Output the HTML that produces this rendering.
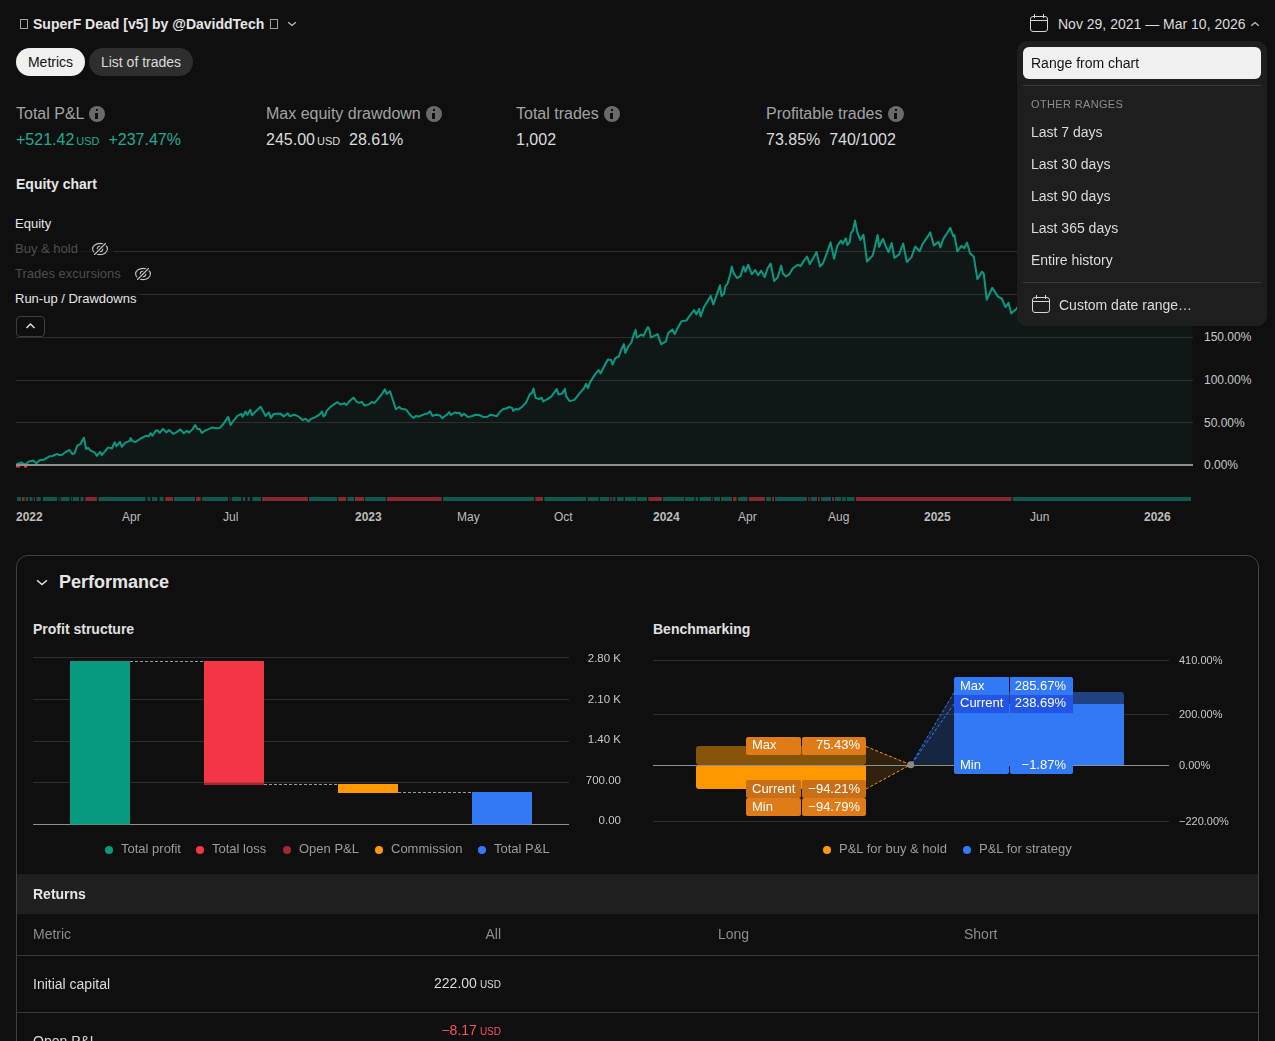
<!DOCTYPE html>
<html><head><meta charset="utf-8"><style>
*{box-sizing:border-box;margin:0;padding:0}
html,body{width:1275px;height:1041px;overflow:hidden;background:#0f0f0f}
body{position:relative;font-family:"Liberation Sans",sans-serif;color:#dbdbdb}
.a{position:absolute;white-space:nowrap}
.tofu{position:absolute;border:1px solid #a0a0a0;}
.pill{position:absolute;height:28px;border-radius:14px;font-size:14px;line-height:28px;text-align:center}
.lbl{font-size:16px;color:#a3a3a3;line-height:20px}
.val{font-size:16px;color:#dbdbdb;line-height:20px}
.usd{font-size:11px;margin-left:2px}
.info{display:inline-block;width:16px;height:16px;border-radius:50%;background:#6a6a6a;position:absolute}.info:before{content:"";position:absolute;left:7px;top:3px;width:2px;height:2px;background:#0f0f0f}.info:after{content:"";position:absolute;left:7px;top:7px;width:2px;height:6px;background:#0f0f0f;box-shadow:-1px 0 0 0 #0f0f0f}
.lg{font-size:13px;line-height:25px;background:rgba(15,15,15,0.6);padding:0 0 0 0}
.ax{font-size:12px;color:#c8c8c8;line-height:14px}
.mo{font-size:12px;color:#bdbdbd;line-height:14px}
.yr{font-weight:700}
.dd{will-change:transform;position:absolute;left:1017px;top:41px;width:250px;height:285px;background:#1e1e1e;border-radius:10px}
.ddi{position:absolute;left:14px;font-size:14px;line-height:32px;color:#dbdbdb}
.sep{position:absolute;left:6px;width:238px;height:1px;background:#3a3a3a}
.pax{font-size:11.5px;color:#c8c8c8;line-height:12px;text-align:right}.bax{font-size:11px}
.leg{font-size:13px;color:#9c9c9c;line-height:16px}
.dot{position:absolute;width:8px;height:8px;border-radius:50%}
.bl{position:absolute;font-size:13px;color:#fff;line-height:18px}
</style></head><body>
<!-- header -->
<div class="tofu" style="left:20px;top:19px;width:8px;height:10px"></div>
<div class="a" style="left:33px;top:16px;font-size:14px;font-weight:700;line-height:17px;color:#e6e6e6">SuperF Dead [v5] by @DaviddTech</div>
<div class="tofu" style="left:270px;top:19px;width:8px;height:10px"></div>
<svg class="a" style="left:286px;top:20px" width="12" height="8" viewBox="0 0 12 8"><path d="M2.2 2.3 L6 5.5 L9.8 2.3" fill="none" stroke="#c4c4c4" stroke-width="1.2"/></svg>

<div class="pill" style="left:16px;top:48px;width:69px;background:#f0f0f0;color:#131313">Metrics</div>
<div class="pill" style="left:89px;top:48px;width:104px;background:#2e2e2e;color:#dbdbdb">List of trades</div>

<!-- date range -->
<svg class="a" style="left:1029px;top:13px" width="20" height="20" viewBox="0 0 20 20"><rect x="1.5" y="3.5" width="17" height="15" rx="2.5" fill="none" stroke="#d6d6d6" stroke-width="1"/><path d="M1.5 7.5 H18.5 M5.5 1 V5 M14.5 1 V5" stroke="#d6d6d6" stroke-width="1"/></svg>
<div class="a" style="left:1058px;top:16px;font-size:14px;line-height:17px;color:#dbdbdb">Nov 29, 2021 — Mar 10, 2026</div>
<svg class="a" style="left:1249px;top:19px" width="12" height="8" viewBox="0 0 12 8"><path d="M2.2 6.7 L6 3.5 L9.8 6.7" fill="none" stroke="#c4c4c4" stroke-width="1.2"/></svg>

<!-- metrics -->
<div class="a lbl" style="left:16px;top:104px">Total P&amp;L</div><div class="info" style="left:89px;top:106px"></div>
<div class="a val" style="left:16px;top:130px;color:#22ab94">+521.42<span class="usd">USD</span>&nbsp;&nbsp;+237.47%</div>
<div class="a lbl" style="left:266px;top:104px">Max equity drawdown</div><div class="info" style="left:426px;top:106px"></div>
<div class="a val" style="left:266px;top:130px">245.00<span class="usd">USD</span>&nbsp;&nbsp;28.61%</div>
<div class="a lbl" style="left:516px;top:104px">Total trades</div><div class="info" style="left:604px;top:106px"></div>
<div class="a val" style="left:516px;top:130px">1,002</div>
<div class="a lbl" style="left:766px;top:104px">Profitable trades</div><div class="info" style="left:888px;top:106px"></div>
<div class="a val" style="left:766px;top:130px">73.85%&nbsp;&nbsp;740/1002</div>

<div class="a" style="left:16px;top:176px;font-size:14px;font-weight:700;line-height:17px;color:#e6e6e6">Equity chart</div>

<!-- chart -->
<svg class="a" style="left:0;top:0" width="1275" height="560" viewBox="0 0 1275 560">
<path d="M16.3,464.4 L21.1,462.5 L25.4,464.6 L28.5,461.6 L33.2,460.5 L36.3,463.2 L39.5,460.3 L43.9,459.7 L49.5,456.3 L52.4,456.0 L57.1,453.8 L58.8,455.0 L61.8,455.0 L65.9,451.8 L69.4,449.9 L72.4,454.2 L74.7,453.0 L77.1,445.9 L80.6,443.8 L83.9,437.7 L86.2,449.1 L88.2,447.9 L90.6,450.6 L94.7,452.3 L96.8,455.8 L100.0,451.8 L101.8,455.0 L104.1,452.3 L108.2,447.4 L111.8,448.5 L114.7,442.4 L116.5,446.2 L120.0,441.8 L121.8,446.8 L125.3,442.6 L130.0,440.9 L130.6,437.9 L132.4,440.9 L135.3,442.1 L140.6,438.5 L145.9,435.8 L148.8,436.2 L150.6,433.0 L152.4,435.8 L155.9,430.6 L157.4,430.3 L159.7,432.9 L163.0,428.9 L166.2,432.4 L169.1,430.1 L173.2,433.8 L176.8,432.1 L180.3,429.4 L183.8,433.2 L187.0,430.9 L189.1,432.6 L192.6,429.1 L195.2,425.0 L197.4,429.1 L199.7,429.1 L201.8,432.9 L205.6,430.3 L208.5,429.1 L212.6,427.4 L216.2,428.2 L219.7,427.9 L223.2,424.2 L225.6,420.6 L228.2,416.8 L230.5,425.0 L233.8,420.3 L237.4,415.9 L241.5,413.8 L242.6,416.8 L245.6,411.5 L247.4,414.8 L250.3,409.7 L252.1,415.2 L255.6,411.5 L260.6,406.8 L263.2,411.5 L265.6,415.9 L268.9,412.4 L270.9,417.9 L273.6,414.1 L280.3,413.6 L283.8,416.4 L287.7,413.2 L289.7,416.2 L294.4,414.8 L298.5,416.4 L302.9,420.2 L305.6,418.6 L308.2,421.4 L311.2,418.8 L315.3,417.1 L319.4,414.7 L322.1,411.5 L323.5,416.5 L325.3,414.7 L326.5,411.2 L330.0,407.3 L333.5,404.7 L337.4,402.1 L340.6,404.5 L344.5,403.3 L346.5,405.0 L349.4,401.2 L353.5,397.6 L357.1,402.1 L359.4,402.9 L361.8,401.8 L364.7,405.6 L369.4,404.1 L372.0,401.8 L374.1,403.3 L377.6,399.4 L381.8,394.1 L384.9,389.4 L386.8,393.9 L390.0,391.2 L395.9,409.2 L399.4,406.8 L401.2,408.8 L405.9,409.4 L410.0,414.7 L413.2,417.9 L416.2,415.9 L418.6,416.7 L424.7,414.1 L427.6,413.5 L430.0,411.2 L432.4,415.9 L436.5,414.7 L440.0,415.5 L442.4,418.2 L445.9,415.3 L447.4,414.4 L449.1,412.1 L450.9,415.0 L455.0,412.4 L457.4,413.2 L459.4,412.6 L461.5,415.9 L464.1,413.8 L467.9,417.1 L471.5,416.2 L475.6,414.8 L479.1,415.0 L483.8,417.1 L487.4,416.8 L490.3,414.8 L494.4,415.6 L496.8,416.2 L500.3,411.5 L503.2,408.9 L506.2,408.5 L509.1,407.0 L512.1,407.9 L513.2,410.9 L515.6,409.1 L518.5,409.4 L522.1,406.8 L526.2,402.3 L529.7,394.4 L532.1,392.6 L533.5,388.5 L535.6,397.9 L539.1,399.1 L541.5,397.6 L543.2,401.5 L547.4,399.1 L551.5,396.4 L553.8,393.2 L556.8,389.1 L558.5,394.4 L562.1,393.6 L565.0,388.9 L566.2,396.4 L569.7,401.1 L574.4,399.9 L579.1,393.8 L583.8,388.5 L586.2,383.8 L588.0,388.2 L590.0,382.4 L594.1,375.9 L598.5,370.0 L600.6,373.5 L603.9,366.7 L607.9,359.4 L611.2,360.0 L612.6,364.7 L615.3,358.2 L618.8,356.5 L620.8,350.6 L623.9,344.1 L625.3,352.9 L628.2,346.5 L631.4,342.4 L632.9,337.1 L635.6,329.8 L636.8,337.6 L641.2,334.7 L643.5,335.9 L645.9,330.6 L647.9,327.1 L649.4,329.4 L650.9,337.6 L657.6,334.1 L661.2,344.1 L665.9,341.5 L668.2,332.9 L672.4,329.4 L674.7,334.1 L677.6,328.2 L681.5,321.2 L686.5,320.4 L690.0,315.3 L694.1,310.0 L696.5,314.4 L699.2,308.8 L700.6,316.5 L703.9,307.1 L707.6,301.2 L710.6,295.9 L713.3,304.5 L716.5,295.3 L720.0,285.3 L721.5,295.9 L724.1,293.5 L725.3,286.5 L727.6,283.5 L730.0,275.3 L731.8,266.5 L733.5,272.9 L737.1,278.2 L740.6,275.9 L743.5,266.5 L745.3,271.8 L748.2,264.7 L751.8,274.1 L755.3,270.0 L758.2,275.3 L761.2,270.6 L764.7,277.1 L767.6,268.2 L770.6,263.5 L774.1,280.9 L777.6,277.6 L781.2,265.6 L782.9,273.5 L785.9,276.5 L789.4,274.1 L792.9,268.2 L797.6,264.7 L800.6,266.1 L803.5,261.4 L807.1,256.5 L809.8,264.1 L812.9,258.8 L816.5,252.0 L820.0,266.5 L822.9,263.5 L827.1,252.4 L830.6,242.4 L834.1,258.8 L837.4,245.6 L840.9,240.6 L842.6,243.8 L845.8,238.3 L847.4,245.0 L849.7,242.1 L850.9,233.2 L852.9,230.9 L855.0,220.6 L857.4,232.6 L860.3,240.0 L863.5,234.8 L867.0,261.5 L872.6,255.6 L875.0,246.2 L877.6,235.0 L879.1,246.8 L883.0,238.8 L885.6,245.8 L888.5,252.1 L891.7,243.0 L894.4,257.9 L899.1,254.4 L903.2,243.5 L906.8,262.1 L911.5,257.1 L915.2,246.5 L919.7,251.2 L922.6,243.8 L926.8,237.9 L930.3,232.4 L933.8,245.6 L938.5,241.8 L940.3,247.4 L943.2,239.1 L946.8,233.6 L950.3,227.9 L953.2,236.2 L954.4,235.0 L957.4,251.5 L961.5,245.8 L964.2,248.2 L967.0,242.6 L970.1,253.2 L973.8,256.8 L977.4,279.1 L982.1,271.5 L983.8,273.8 L986.7,299.7 L992.3,287.8 L998.0,296.6 L1001.7,298.5 L1005.5,307.2 L1008.6,302.8 L1011.2,313.5 L1016.8,308.5 L1020.0,302.4 L1024.1,303.7 L1028.3,306.3 L1031.4,300.1 L1036.1,302.6 L1039.6,310.0 L1043.5,308.4 L1047.5,306.4 L1050.8,306.3 L1055.5,305.2 L1060.0,306.7 L1063.1,307.6 L1067.3,303.0 L1070.4,308.7 L1074.3,307.2 L1079.1,307.1 L1083.9,303.9 L1088.5,304.4 L1093.4,308.8 L1096.6,301.4 L1100.0,309.7 L1103.9,306.3 L1107.5,305.1 L1111.2,303.5 L1115.4,305.8 L1120.2,306.8 L1125.1,308.6 L1130.1,306.7 L1133.4,308.6 L1138.3,309.0 L1142.5,307.1 L1145.9,308.3 L1150.0,302.8 L1153.2,308.5 L1158.1,300.9 L1162.7,304.1 L1166.0,302.9 L1170.6,308.7 L1173.7,306.1 L1176.8,307.2 L1180.4,308.8 L1185.4,305.1 L1190.4,303.1 L1192.0,298.0 L1192,465 L16.3,465 Z" fill="#101817"/>
<g stroke="#2e2e2e" stroke-width="1">
<path d="M16 251.5 H1193 M16 294.5 H1193 M16 337.5 H1193 M16 380.5 H1193 M16 422.5 H1193"/>
</g>
<path d="M16.3,464.4 L21.1,462.5 L25.4,464.6 L28.5,461.6 L33.2,460.5 L36.3,463.2 L39.5,460.3 L43.9,459.7 L49.5,456.3 L52.4,456.0 L57.1,453.8 L58.8,455.0 L61.8,455.0 L65.9,451.8 L69.4,449.9 L72.4,454.2 L74.7,453.0 L77.1,445.9 L80.6,443.8 L83.9,437.7 L86.2,449.1 L88.2,447.9 L90.6,450.6 L94.7,452.3 L96.8,455.8 L100.0,451.8 L101.8,455.0 L104.1,452.3 L108.2,447.4 L111.8,448.5 L114.7,442.4 L116.5,446.2 L120.0,441.8 L121.8,446.8 L125.3,442.6 L130.0,440.9 L130.6,437.9 L132.4,440.9 L135.3,442.1 L140.6,438.5 L145.9,435.8 L148.8,436.2 L150.6,433.0 L152.4,435.8 L155.9,430.6 L157.4,430.3 L159.7,432.9 L163.0,428.9 L166.2,432.4 L169.1,430.1 L173.2,433.8 L176.8,432.1 L180.3,429.4 L183.8,433.2 L187.0,430.9 L189.1,432.6 L192.6,429.1 L195.2,425.0 L197.4,429.1 L199.7,429.1 L201.8,432.9 L205.6,430.3 L208.5,429.1 L212.6,427.4 L216.2,428.2 L219.7,427.9 L223.2,424.2 L225.6,420.6 L228.2,416.8 L230.5,425.0 L233.8,420.3 L237.4,415.9 L241.5,413.8 L242.6,416.8 L245.6,411.5 L247.4,414.8 L250.3,409.7 L252.1,415.2 L255.6,411.5 L260.6,406.8 L263.2,411.5 L265.6,415.9 L268.9,412.4 L270.9,417.9 L273.6,414.1 L280.3,413.6 L283.8,416.4 L287.7,413.2 L289.7,416.2 L294.4,414.8 L298.5,416.4 L302.9,420.2 L305.6,418.6 L308.2,421.4 L311.2,418.8 L315.3,417.1 L319.4,414.7 L322.1,411.5 L323.5,416.5 L325.3,414.7 L326.5,411.2 L330.0,407.3 L333.5,404.7 L337.4,402.1 L340.6,404.5 L344.5,403.3 L346.5,405.0 L349.4,401.2 L353.5,397.6 L357.1,402.1 L359.4,402.9 L361.8,401.8 L364.7,405.6 L369.4,404.1 L372.0,401.8 L374.1,403.3 L377.6,399.4 L381.8,394.1 L384.9,389.4 L386.8,393.9 L390.0,391.2 L395.9,409.2 L399.4,406.8 L401.2,408.8 L405.9,409.4 L410.0,414.7 L413.2,417.9 L416.2,415.9 L418.6,416.7 L424.7,414.1 L427.6,413.5 L430.0,411.2 L432.4,415.9 L436.5,414.7 L440.0,415.5 L442.4,418.2 L445.9,415.3 L447.4,414.4 L449.1,412.1 L450.9,415.0 L455.0,412.4 L457.4,413.2 L459.4,412.6 L461.5,415.9 L464.1,413.8 L467.9,417.1 L471.5,416.2 L475.6,414.8 L479.1,415.0 L483.8,417.1 L487.4,416.8 L490.3,414.8 L494.4,415.6 L496.8,416.2 L500.3,411.5 L503.2,408.9 L506.2,408.5 L509.1,407.0 L512.1,407.9 L513.2,410.9 L515.6,409.1 L518.5,409.4 L522.1,406.8 L526.2,402.3 L529.7,394.4 L532.1,392.6 L533.5,388.5 L535.6,397.9 L539.1,399.1 L541.5,397.6 L543.2,401.5 L547.4,399.1 L551.5,396.4 L553.8,393.2 L556.8,389.1 L558.5,394.4 L562.1,393.6 L565.0,388.9 L566.2,396.4 L569.7,401.1 L574.4,399.9 L579.1,393.8 L583.8,388.5 L586.2,383.8 L588.0,388.2 L590.0,382.4 L594.1,375.9 L598.5,370.0 L600.6,373.5 L603.9,366.7 L607.9,359.4 L611.2,360.0 L612.6,364.7 L615.3,358.2 L618.8,356.5 L620.8,350.6 L623.9,344.1 L625.3,352.9 L628.2,346.5 L631.4,342.4 L632.9,337.1 L635.6,329.8 L636.8,337.6 L641.2,334.7 L643.5,335.9 L645.9,330.6 L647.9,327.1 L649.4,329.4 L650.9,337.6 L657.6,334.1 L661.2,344.1 L665.9,341.5 L668.2,332.9 L672.4,329.4 L674.7,334.1 L677.6,328.2 L681.5,321.2 L686.5,320.4 L690.0,315.3 L694.1,310.0 L696.5,314.4 L699.2,308.8 L700.6,316.5 L703.9,307.1 L707.6,301.2 L710.6,295.9 L713.3,304.5 L716.5,295.3 L720.0,285.3 L721.5,295.9 L724.1,293.5 L725.3,286.5 L727.6,283.5 L730.0,275.3 L731.8,266.5 L733.5,272.9 L737.1,278.2 L740.6,275.9 L743.5,266.5 L745.3,271.8 L748.2,264.7 L751.8,274.1 L755.3,270.0 L758.2,275.3 L761.2,270.6 L764.7,277.1 L767.6,268.2 L770.6,263.5 L774.1,280.9 L777.6,277.6 L781.2,265.6 L782.9,273.5 L785.9,276.5 L789.4,274.1 L792.9,268.2 L797.6,264.7 L800.6,266.1 L803.5,261.4 L807.1,256.5 L809.8,264.1 L812.9,258.8 L816.5,252.0 L820.0,266.5 L822.9,263.5 L827.1,252.4 L830.6,242.4 L834.1,258.8 L837.4,245.6 L840.9,240.6 L842.6,243.8 L845.8,238.3 L847.4,245.0 L849.7,242.1 L850.9,233.2 L852.9,230.9 L855.0,220.6 L857.4,232.6 L860.3,240.0 L863.5,234.8 L867.0,261.5 L872.6,255.6 L875.0,246.2 L877.6,235.0 L879.1,246.8 L883.0,238.8 L885.6,245.8 L888.5,252.1 L891.7,243.0 L894.4,257.9 L899.1,254.4 L903.2,243.5 L906.8,262.1 L911.5,257.1 L915.2,246.5 L919.7,251.2 L922.6,243.8 L926.8,237.9 L930.3,232.4 L933.8,245.6 L938.5,241.8 L940.3,247.4 L943.2,239.1 L946.8,233.6 L950.3,227.9 L953.2,236.2 L954.4,235.0 L957.4,251.5 L961.5,245.8 L964.2,248.2 L967.0,242.6 L970.1,253.2 L973.8,256.8 L977.4,279.1 L982.1,271.5 L983.8,273.8 L986.7,299.7 L992.3,287.8 L998.0,296.6 L1001.7,298.5 L1005.5,307.2 L1008.6,302.8 L1011.2,313.5 L1016.8,308.5 L1020.0,302.4 L1024.1,303.7 L1028.3,306.3 L1031.4,300.1 L1036.1,302.6 L1039.6,310.0 L1043.5,308.4 L1047.5,306.4 L1050.8,306.3 L1055.5,305.2 L1060.0,306.7 L1063.1,307.6 L1067.3,303.0 L1070.4,308.7 L1074.3,307.2 L1079.1,307.1 L1083.9,303.9 L1088.5,304.4 L1093.4,308.8 L1096.6,301.4 L1100.0,309.7 L1103.9,306.3 L1107.5,305.1 L1111.2,303.5 L1115.4,305.8 L1120.2,306.8 L1125.1,308.6 L1130.1,306.7 L1133.4,308.6 L1138.3,309.0 L1142.5,307.1 L1145.9,308.3 L1150.0,302.8 L1153.2,308.5 L1158.1,300.9 L1162.7,304.1 L1166.0,302.9 L1170.6,308.7 L1173.7,306.1 L1176.8,307.2 L1180.4,308.8 L1185.4,305.1 L1190.4,303.1 L1192.0,298.0" fill="none" stroke="#089981" stroke-width="2" stroke-linejoin="round"/>
<path d="M16 465 H1193" stroke="#8f8f8f" stroke-width="2"/>
<rect x="16" y="466" width="4" height="1.5" fill="#f23645"/><rect x="24" y="466" width="3" height="1.5" fill="#f23645"/>
<rect x="16.9" y="497" width="4.1" height="4" fill="#0b5a4d"/><rect x="21.9" y="497" width="2.8" height="4" fill="#88272f"/><rect x="25.7" y="497" width="2.5" height="4" fill="#0b5a4d"/><rect x="29.5" y="497" width="3.1" height="4" fill="#0b5a4d"/><rect x="33.8" y="497" width="1.2" height="4" fill="#88272f"/><rect x="36.4" y="497" width="4.3" height="4" fill="#0b5a4d"/><rect x="43.0" y="497" width="14.0" height="4" fill="#0b5a4d"/><rect x="58.6" y="497" width="1.0" height="4" fill="#0b5a4d"/><rect x="60.8" y="497" width="8.8" height="4" fill="#0b5a4d"/><rect x="71.0" y="497" width="1.0" height="4" fill="#0b5a4d"/><rect x="72.7" y="497" width="6.3" height="4" fill="#0b5a4d"/><rect x="80.6" y="497" width="3.1" height="4" fill="#0b5a4d"/><rect x="85.3" y="497" width="11.6" height="4" fill="#88272f"/><rect x="98.5" y="497" width="47.0" height="4" fill="#0b5a4d"/><rect x="147.4" y="497" width="3.1" height="4" fill="#0b5a4d"/><rect x="152.0" y="497" width="5.5" height="4" fill="#0b5a4d"/><rect x="159.6" y="497" width="4.1" height="4" fill="#0b5a4d"/><rect x="165.3" y="497" width="7.8" height="4" fill="#88272f"/><rect x="174.0" y="497" width="21.0" height="4" fill="#0b5a4d"/><rect x="196.0" y="497" width="4.7" height="4" fill="#88272f"/><rect x="202.0" y="497" width="26.0" height="4" fill="#0b5a4d"/><rect x="229.6" y="497" width="0.9" height="4" fill="#88272f"/><rect x="231.8" y="497" width="9.4" height="4" fill="#0b5a4d"/><rect x="242.8" y="497" width="2.5" height="4" fill="#0b5a4d"/><rect x="247.5" y="497" width="2.5" height="4" fill="#0b5a4d"/><rect x="252.2" y="497" width="8.8" height="4" fill="#0b5a4d"/><rect x="262.0" y="497" width="46.0" height="4" fill="#88272f"/><rect x="309.0" y="497" width="28.2" height="4" fill="#0b5a4d"/><rect x="338.2" y="497" width="8.1" height="4" fill="#88272f"/><rect x="347.3" y="497" width="6.9" height="4" fill="#0b5a4d"/><rect x="355.0" y="497" width="9.0" height="4" fill="#88272f"/><rect x="364.8" y="497" width="21.0" height="4" fill="#0b5a4d"/><rect x="386.8" y="497" width="54.9" height="4" fill="#88272f"/><rect x="443.0" y="497" width="91.0" height="4" fill="#0b5a4d"/><rect x="535.2" y="497" width="7.8" height="4" fill="#88272f"/><rect x="544.3" y="497" width="41.7" height="4" fill="#0b5a4d"/><rect x="587.6" y="497" width="11.0" height="4" fill="#0b5a4d"/><rect x="599.8" y="497" width="9.5" height="4" fill="#0b5a4d"/><rect x="610.2" y="497" width="1.6" height="4" fill="#88272f"/><rect x="612.7" y="497" width="2.8" height="4" fill="#0b5a4d"/><rect x="617.0" y="497" width="6.7" height="4" fill="#0b5a4d"/><rect x="625.0" y="497" width="11.0" height="4" fill="#0b5a4d"/><rect x="636.9" y="497" width="10.0" height="4" fill="#0b5a4d"/><rect x="648.2" y="497" width="13.8" height="4" fill="#88272f"/><rect x="663.0" y="497" width="21.0" height="4" fill="#0b5a4d"/><rect x="684.9" y="497" width="9.4" height="4" fill="#0b5a4d"/><rect x="695.5" y="497" width="2.5" height="4" fill="#0b5a4d"/><rect x="699.6" y="497" width="11.6" height="4" fill="#0b5a4d"/><rect x="712.2" y="497" width="0.8" height="4" fill="#88272f"/><rect x="714.0" y="497" width="6.0" height="4" fill="#0b5a4d"/><rect x="721.0" y="497" width="11.0" height="4" fill="#0b5a4d"/><rect x="733.0" y="497" width="3.6" height="4" fill="#88272f"/><rect x="737.9" y="497" width="9.7" height="4" fill="#0b5a4d"/><rect x="748.9" y="497" width="16.0" height="4" fill="#88272f"/><rect x="766.0" y="497" width="5.0" height="4" fill="#0b5a4d"/><rect x="772.0" y="497" width="2.0" height="4" fill="#88272f"/><rect x="775.0" y="497" width="31.9" height="4" fill="#0b5a4d"/><rect x="808.2" y="497" width="1.5" height="4" fill="#88272f"/><rect x="810.7" y="497" width="6.3" height="4" fill="#0b5a4d"/><rect x="818.0" y="497" width="1.8" height="4" fill="#88272f"/><rect x="821.0" y="497" width="10.0" height="4" fill="#0b5a4d"/><rect x="832.0" y="497" width="2.0" height="4" fill="#88272f"/><rect x="834.8" y="497" width="6.2" height="4" fill="#0b5a4d"/><rect x="842.0" y="497" width="3.8" height="4" fill="#0b5a4d"/><rect x="846.8" y="497" width="7.8" height="4" fill="#0b5a4d"/><rect x="855.9" y="497" width="155.6" height="4" fill="#88272f"/><rect x="1012.7" y="497" width="178.3" height="4" fill="#0b5a4d"/>
</svg>

<div class="a ax" style="left:1204px;top:330px">150.00%</div>
<div class="a ax" style="left:1204px;top:373px">100.00%</div>
<div class="a ax" style="left:1204px;top:416px">50.00%</div>
<div class="a ax" style="left:1204px;top:458px">0.00%</div>

<div class="a mo yr" style="left:16px;top:510px">2022</div>
<div class="a mo" style="left:122px;top:510px">Apr</div>
<div class="a mo" style="left:223px;top:510px">Jul</div>
<div class="a mo yr" style="left:355px;top:510px">2023</div>
<div class="a mo" style="left:457px;top:510px">May</div>
<div class="a mo" style="left:554px;top:510px">Oct</div>
<div class="a mo yr" style="left:653px;top:510px">2024</div>
<div class="a mo" style="left:738px;top:510px">Apr</div>
<div class="a mo" style="left:828px;top:510px">Aug</div>
<div class="a mo yr" style="left:924px;top:510px">2025</div>
<div class="a mo" style="left:1030px;top:510px">Jun</div>
<div class="a mo yr" style="left:1144px;top:510px">2026</div>

<!-- legend -->
<div class="a lg" style="left:12px;top:211px;width:60px;padding-left:3px;color:#e6e6e6">Equity</div>
<div class="a lg" style="left:12px;top:236px;width:102px;padding-left:3px;color:#4d4d4d">Buy &amp; hold</div>
<svg class="a" style="left:91px;top:241px" width="18" height="16" viewBox="0 0 18 16"><ellipse cx="9" cy="8" rx="7.4" ry="5.6" fill="none" stroke="#c4c4c4" stroke-width="1.1"/><circle cx="9" cy="8" r="2.7" fill="none" stroke="#c4c4c4" stroke-width="1.1"/><path d="M3.5 13.5 L14.5 2.5" stroke="#0f0f0f" stroke-width="3.2"/><path d="M3.5 13.5 L14.5 2.5" stroke="#c4c4c4" stroke-width="1.1" stroke-linecap="round"/></svg>
<div class="a lg" style="left:12px;top:261px;width:144px;padding-left:3px;color:#4d4d4d">Trades excursions</div>
<svg class="a" style="left:134px;top:266px" width="18" height="16" viewBox="0 0 18 16"><ellipse cx="9" cy="8" rx="7.4" ry="5.6" fill="none" stroke="#c4c4c4" stroke-width="1.1"/><circle cx="9" cy="8" r="2.7" fill="none" stroke="#c4c4c4" stroke-width="1.1"/><path d="M3.5 13.5 L14.5 2.5" stroke="#0f0f0f" stroke-width="3.2"/><path d="M3.5 13.5 L14.5 2.5" stroke="#c4c4c4" stroke-width="1.1" stroke-linecap="round"/></svg>
<div class="a lg" style="left:12px;top:286px;width:128px;padding-left:3px;color:#e6e6e6">Run-up / Drawdowns</div>
<div class="a" style="left:16px;top:316px;width:29px;height:21px;border:1px solid #3d3d3d;border-radius:4px;background:#0f0f0f"></div>
<svg class="a" style="left:24px;top:321px" width="13" height="10" viewBox="0 0 13 10"><path d="M2.5 7 L6.5 3 L10.5 7" fill="none" stroke="#dbdbdb" stroke-width="1.5"/></svg>

<!-- dropdown -->
<div class="dd">
  <div style="position:absolute;left:6px;top:6px;width:238px;height:32px;border-radius:6px;background:#f0f0f0"></div>
  <div class="ddi" style="top:6px;color:#131313">Range from chart</div>
  <div class="sep" style="top:44px"></div>
  <div class="a" style="left:14px;top:57px;font-size:11px;letter-spacing:0.35px;color:#8c8c8c;line-height:13px">OTHER RANGES</div>
  <div class="ddi" style="top:75px">Last 7 days</div>
  <div class="ddi" style="top:107px">Last 30 days</div>
  <div class="ddi" style="top:139px">Last 90 days</div>
  <div class="ddi" style="top:171px">Last 365 days</div>
  <div class="ddi" style="top:203px">Entire history</div>
  <div class="sep" style="top:241px"></div>
  <svg class="a" style="left:14px;top:253px" width="20" height="20" viewBox="0 0 20 20"><rect x="1.5" y="3.5" width="17" height="15" rx="2.5" fill="none" stroke="#d6d6d6" stroke-width="1"/><path d="M1.5 7.5 H18.5 M5.5 1 V5 M14.5 1 V5" stroke="#d6d6d6" stroke-width="1"/></svg>
  <div class="ddi" style="left:42px;top:248px">Custom date range…</div>
</div>

<!-- performance panel -->
<div class="a" style="left:16px;top:555px;width:1243px;height:600px;border:1px solid #424242;border-radius:12px"></div>
<svg class="a" style="left:34px;top:575px" width="16" height="14" viewBox="0 0 16 14"><path d="M3 5.2 L8 9.6 L13 5.2" fill="none" stroke="#e0e0e0" stroke-width="1.5"/></svg>
<div class="a" style="left:59px;top:572px;font-size:18px;font-weight:700;line-height:21px;color:#e6e6e6">Performance</div>

<div class="a" style="left:33px;top:621px;font-size:14px;font-weight:700;line-height:17px;color:#e0e0e0">Profit structure</div>
<div class="a" style="left:653px;top:621px;font-size:14px;font-weight:700;line-height:17px;color:#e0e0e0">Benchmarking</div>

<svg class="a" style="left:0;top:0" width="1275" height="1041" viewBox="0 0 1275 1041">
<g stroke="#2e2e2e" stroke-width="1">
<path d="M33 657.5 H569 M33 699.5 H569 M33 741.5 H569 M33 782.5 H569"/>
<path d="M653 660.5 H1169 M653 714.5 H1169 M653 821.5 H1169"/>
</g>
<path d="M33 824.5 H569" stroke="#8f8f8f" stroke-width="1"/>
<rect x="70" y="661" width="60" height="163.5" fill="#089981"/>
<rect x="204" y="661" width="60" height="124" fill="#f23645"/>
<rect x="204" y="782.5" width="60" height="2.5" fill="#a32a33"/>
<rect x="338" y="784" width="60" height="9" fill="#ff9800"/>
<rect x="472" y="792" width="60" height="32.5" fill="#3179f5"/>
<g stroke="#9a9a9a" stroke-width="1" stroke-dasharray="3 2">
<path d="M130 661.5 H204 M264 784.5 H338 M398 792.5 H472"/>
</g>
<!-- benchmark -->
<path d="M865.7 746 L910.7 764.8 L865.7 789 Z" fill="#ff9800" fill-opacity="0.14"/>
<path d="M953.9 692.5 L910.7 764.8 L953.9 764.8 Z" fill="#3179f5" fill-opacity="0.22"/>

<rect x="696" y="746" width="170" height="19" rx="3" fill="#875308"/>
<rect x="696" y="765" width="170" height="24" rx="3" fill="#ff9800"/>
<rect x="700" y="765" width="166" height="4" fill="#ff9800"/>
<rect x="954" y="692" width="170" height="13" rx="3" fill="#204482"/>
<rect x="954" y="704" width="170" height="61" fill="#3179f5"/>
<g stroke-width="1" stroke-dasharray="3 2" fill="none">
<path d="M866 746.5 L910 764.5 M866 789 L910 765" stroke="#ff9800"/>
<path d="M954 692.5 L911 764.5 M954 704 L911 765" stroke="#3179f5"/>
<path d="M866 764.5 H910 M911 764.5 H954" stroke="#222"/>
</g>
<path d="M653 765.5 H1169" stroke="#8f8f8f" stroke-width="1"/>
<circle cx="910.7" cy="764.8" r="3.5" fill="#8a8a8a"/>
</svg>

<div class="a pax" style="left:560px;top:652px;width:61px">2.80 K</div>
<div class="a pax" style="left:560px;top:693px;width:61px">2.10 K</div>
<div class="a pax" style="left:560px;top:733px;width:61px">1.40 K</div>
<div class="a pax" style="left:560px;top:774px;width:61px">700.00</div>
<div class="a pax" style="left:560px;top:814px;width:61px">0.00</div>

<div class="a pax bax" style="left:1179px;top:654px;text-align:left">410.00%</div>
<div class="a pax bax" style="left:1179px;top:708px;text-align:left">200.00%</div>
<div class="a pax bax" style="left:1179px;top:759px;text-align:left">0.00%</div>
<div class="a pax bax" style="left:1179px;top:815px;text-align:left">−220.00%</div>

<!-- benchmark labels -->
<div class="a" style="left:746px;top:737px;width:55px;height:18px;background:#e07b1a;border-radius:2px"></div>
<div class="a" style="left:802px;top:737px;width:64px;height:18px;background:#e07b1a;border-radius:2px"></div>
<div class="bl" style="left:752px;top:736px">Max</div><div class="bl" style="left:802px;top:736px;width:58px;text-align:right">75.43%</div>
<div class="a" style="left:746px;top:780px;width:55px;height:18px;background:#c96f17;border-radius:2px"></div>
<div class="a" style="left:802px;top:780px;width:64px;height:18px;background:#c96f17;border-radius:2px"></div>
<div class="bl" style="left:752px;top:780px">Current</div><div class="bl" style="left:802px;top:780px;width:58px;text-align:right">−94.21%</div>
<div class="a" style="left:746px;top:798px;width:55px;height:18px;background:#e07b1a;border-radius:2px"></div>
<div class="a" style="left:802px;top:798px;width:64px;height:18px;background:#e07b1a;border-radius:2px"></div>
<div class="bl" style="left:752px;top:798px">Min</div><div class="bl" style="left:802px;top:798px;width:58px;text-align:right">−94.79%</div>

<div class="a" style="left:954px;top:677px;width:55px;height:18px;background:#3179f5;border-radius:2px 0 0 0"></div>
<div class="a" style="left:1010px;top:677px;width:63px;height:18px;background:#3179f5;border-radius:0 2px 0 0"></div>
<div class="bl" style="left:960px;top:677px">Max</div><div class="bl" style="left:1010px;top:677px;width:56px;text-align:right">285.67%</div>
<div class="a" style="left:954px;top:695px;width:55px;height:18px;background:#2356e6"></div>
<div class="a" style="left:1010px;top:695px;width:63px;height:18px;background:#2356e6"></div>
<div class="bl" style="left:960px;top:694px">Current</div><div class="bl" style="left:1010px;top:694px;width:56px;text-align:right">238.69%</div>
<div class="a" style="left:954px;top:759px;width:55px;height:15px;background:#3179f5;border-radius:0 0 2px 2px"></div>
<div class="a" style="left:1010px;top:759px;width:63px;height:15px;background:#3179f5;border-radius:0 0 2px 2px"></div>
<div class="bl" style="left:960px;top:756px">Min</div><div class="bl" style="left:1010px;top:756px;width:56px;text-align:right">−1.87%</div>

<!-- legends -->
<div class="dot" style="margin-top:1px;left:105px;top:845px;background:#089981"></div><div class="a leg" style="margin-top:1px;left:121px;top:840px">Total profit</div>
<div class="dot" style="margin-top:1px;left:196px;top:845px;background:#f23645"></div><div class="a leg" style="margin-top:1px;left:212px;top:840px">Total loss</div>
<div class="dot" style="margin-top:1px;left:283px;top:845px;background:#a32a33"></div><div class="a leg" style="margin-top:1px;left:299px;top:840px">Open P&amp;L</div>
<div class="dot" style="margin-top:1px;left:375px;top:845px;background:#ff9800"></div><div class="a leg" style="margin-top:1px;left:391px;top:840px">Commission</div>
<div class="dot" style="margin-top:1px;left:478px;top:845px;background:#3179f5"></div><div class="a leg" style="margin-top:1px;left:494px;top:840px">Total P&amp;L</div>

<div class="dot" style="margin-top:1px;left:823px;top:845px;background:#ff9800"></div><div class="a leg" style="margin-top:1px;left:839px;top:840px">P&amp;L for buy &amp; hold</div>
<div class="dot" style="margin-top:1px;left:963px;top:845px;background:#3179f5"></div><div class="a leg" style="margin-top:1px;left:979px;top:840px">P&amp;L for strategy</div>

<!-- returns table -->
<div class="a" style="left:17px;top:874px;width:1241px;height:40px;background:#1f1f1f"></div>
<div class="a" style="left:33px;top:886px;font-size:14px;font-weight:700;line-height:17px;color:#e6e6e6">Returns</div>
<div class="a" style="left:33px;top:926px;font-size:14px;line-height:17px;color:#8c8c8c">Metric</div>
<div class="a" style="left:400px;top:926px;width:101px;text-align:right;font-size:14px;line-height:17px;color:#8c8c8c">All</div>
<div class="a" style="left:718px;top:926px;font-size:14px;line-height:17px;color:#8c8c8c">Long</div>
<div class="a" style="left:964px;top:926px;font-size:14px;line-height:17px;color:#8c8c8c">Short</div>
<div class="a" style="left:17px;top:955px;width:1241px;height:1px;background:#3a3a3a"></div>
<div class="a" style="left:33px;top:976px;font-size:14px;line-height:17px;color:#dbdbdb">Initial capital</div>
<div class="a" style="left:350px;top:975px;width:151px;text-align:right;font-size:14px;line-height:17px;color:#dbdbdb">222.00<span class="usd" style="font-size:10px;margin-left:3px">USD</span></div>
<div class="a" style="left:17px;top:1012px;width:1241px;height:1px;background:#3a3a3a"></div>
<div class="a" style="left:33px;top:1033px;font-size:14px;line-height:17px;color:#dbdbdb">Open P&amp;L</div>
<div class="a" style="left:350px;top:1022px;width:151px;text-align:right;font-size:14px;line-height:17px;color:#f7525f">−8.17<span class="usd" style="font-size:10px;margin-left:3px">USD</span></div>
</body></html>
